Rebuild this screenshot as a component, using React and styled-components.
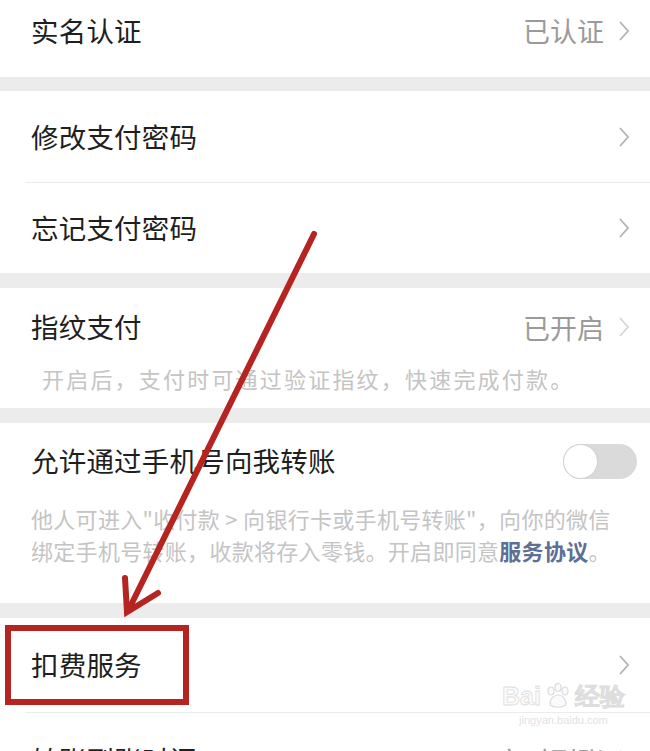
import React from "react";
import styled, { createGlobalStyle } from "styled-components";

const GlobalStyle = createGlobalStyle`
  html, body {
    margin: 0;
    padding: 0;
    background: #ffffff;
    overflow: hidden;
  }
  body {
    font-family: "Noto Sans CJK SC", "Noto Sans", sans-serif;
    color: #1f1f1f;
  }
`;

const Screen = styled.div`
  position: relative;
  width: 650px;
  height: 751px;
  overflow: hidden;
  background: #fff;
`;

const Band = styled.div`
  height: ${(p) => p.$h || 15}px;
  background: #ececec;
`;

const Divider = styled.div`
  height: 1px;
  margin-left: 25px;
  background: #ebebeb;
`;

const Row = styled.div`
  position: relative;
  display: flex;
  align-items: center;
  justify-content: space-between;
  height: ${(p) => p.$h}px;
  padding: 0 20px 0 31px;
  padding-bottom: ${(p) => p.$pb || 0}px;
  box-sizing: border-box;
`;

const Label = styled.span`
  font-size: 27.5px;
  line-height: 1;
  color: #1f1f1f;
  letter-spacing: 0.2px;
`;

const Right = styled.div`
  display: flex;
  align-items: center;
  gap: 14px;
`;

const Value = styled.span`
  font-size: 27px;
  line-height: 1;
  color: #9a9a9a;
`;

const Note = styled.p`
  margin: 0;
  padding: ${(p) => p.$pad};
  font-size: 22px;
  line-height: ${(p) => p.$lh || 24}px;
  color: #c4c4c4;
  letter-spacing: ${(p) => p.$ls || 0.3}px;
  white-space: nowrap;
`;

const Link = styled.span`
  color: #5d6f95;
  font-weight: 600;
`;

const Toggle = styled.div`
  position: relative;
  width: 74px;
  height: 35px;
  margin-right: -7px;
  border-radius: 18px;
  background: #dadada;
  box-sizing: border-box;
`;

const Knob = styled.div`
  position: absolute;
  left: 1px;
  top: 1px;
  width: 33px;
  height: 33px;
  border-radius: 50%;
  background: #fff;
  box-shadow: 0 0 0 1px #d2d2d2;
`;

const Highlight = styled.div`
  position: absolute;
  left: 5px;
  top: 7px;
  width: 184px;
  height: 80px;
  border: 6px solid #b52420;
  box-sizing: border-box;
`;

const ArrowLayer = styled.svg`
  position: absolute;
  left: 0;
  top: 0;
  pointer-events: none;
`;

const Watermark = styled.div`
  position: absolute;
  left: 502px;
  top: 683px;
  display: flex;
  flex-direction: column;
  align-items: center;
  font-family: "Liberation Sans", Arial, sans-serif;
  pointer-events: none;
`;

const MarkTop = styled.div`
  display: flex;
  align-items: flex-end;
  gap: 3px;
  font-size: 25px;
  font-weight: 700;
  line-height: 1;
  color: #fafafa;
  -webkit-text-stroke: 0.8px #dedede;
`;

const MarkSub = styled.div`
  margin-top: 5px;
  font-size: 11px;
  color: #e2e2e2;
`;

const Chevron = ({ color = "#b3b3b3" }) => (
  <svg width="12" height="22" viewBox="0 0 12 22">
    <path d="M2 2 L10 11 L2 20" fill="none" stroke={color} strokeWidth="1.8" />
  </svg>
);

const Paw = () => (
  <svg width="28" height="26" viewBox="0 0 28 26">
    <g fill="#fafafa" stroke="#dcdcdc" strokeWidth="1.2">
      <ellipse cx="7" cy="8" rx="3" ry="4" />
      <ellipse cx="14" cy="4.5" rx="3" ry="4" />
      <ellipse cx="21" cy="8" rx="3" ry="4" />
      <path d="M6 22 C6 15 10 12 14 12 C18 12 22 15 22 22 C18 25 10 25 6 22 Z" />
    </g>
  </svg>
);

export default function App() {
  return (
    <>
      <GlobalStyle />
      <Screen>
        <Row $h={77} $pb={16}>
          <Label>实名认证</Label>
          <Right>
            <Value>已认证</Value>
            <Chevron />
          </Right>
        </Row>
        <Band $h={14} />
        <Row $h={91}>
          <Label>修改支付密码</Label>
          <Chevron />
        </Row>
        <Divider />
        <Row $h={90}>
          <Label>忘记支付密码</Label>
          <Chevron />
        </Row>
        <Band />
        <Row $h={78}>
          <Label>指纹支付</Label>
          <Right>
            <Value>已开启</Value>
            <Chevron color="#d6d6d6" />
          </Right>
        </Row>
        <Note $pad="0 20px 18px 42px" $ls={2.2}>
          开启后，支付时可通过验证指纹，快速完成付款。
        </Note>
        <Band />
        <Row $h={76}>
          <Label>允许通过手机号向我转账</Label>
          <Toggle>
            <Knob />
          </Toggle>
        </Row>
        <Note $pad="3px 20px 37px 31px" $lh={32}>
          他人可进入"收付款 &gt; 向银行卡或手机号转账"，向你的微信
          <br />
          绑定手机号转账，收款将存入零钱。开启即同意<Link>服务协议</Link>。
        </Note>
        <Band />
        <Row $h={94}>
          <Label>扣费服务</Label>
          <Chevron />
          <Highlight />
        </Row>
        <Divider />
        <Row $h={94}>
          <Label>转账到账时间</Label>
          <Right>
            <Value>实时到账</Value>
            <Chevron />
          </Right>
        </Row>

        <ArrowLayer width="650" height="751" viewBox="0 0 650 751">
          <g stroke="#b52420" strokeWidth="6" strokeLinecap="round" fill="none">
            <line x1="314" y1="234" x2="129" y2="609" />
            <polyline points="125,578 127,612 158,593" strokeLinejoin="miter" />
          </g>
        </ArrowLayer>

        <Watermark>
          <MarkTop>
            <span>Bai</span>
            <Paw />
            <span>经验</span>
          </MarkTop>
          <MarkSub>jingyan.baidu.com</MarkSub>
        </Watermark>
      </Screen>
    </>
  );
}
